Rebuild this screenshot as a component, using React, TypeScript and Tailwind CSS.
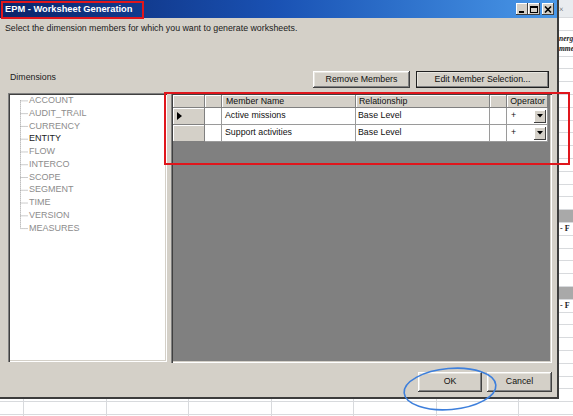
import React from "react";

const raised =
  "shadow-[inset_-1px_-1px_0_#404040,inset_1px_1px_0_#ffffff,inset_-2px_-2px_0_#808080,inset_2px_2px_0_#e8e6e0]";
const raisedSmall = "shadow-[inset_-1px_-1px_0_#404040,inset_1px_1px_0_#ffffff]";
const sunken =
  "shadow-[inset_1px_1px_0_#808080,inset_2px_2px_0_#404040,inset_-1px_-1px_0_#ffffff,inset_-2px_-2px_0_#d4d0c8]";

const dims = [
  "ACCOUNT",
  "AUDIT_TRAIL",
  "CURRENCY",
  "ENTITY",
  "FLOW",
  "INTERCO",
  "SCOPE",
  "SEGMENT",
  "TIME",
  "VERSION",
  "MEASURES",
];

const ROWH = 12.77;

function TitleButton({ kind }: { kind: "min" | "max" | "close" }) {
  return (
    <div className={`w-[12px] h-[12px] bg-[#d4d0c8] flex items-center justify-center ${raisedSmall}`}>
      <svg width="8" height="7" viewBox="0 0 8 7">
        {kind === "min" && <rect x="1" y="5" width="5" height="2" fill="#000" />}
        {kind === "max" && (
          <g fill="none" stroke="#000">
            <rect x="0.5" y="0.5" width="7" height="6" />
            <line x1="0" y1="1.5" x2="8" y2="1.5" />
          </g>
        )}
        {kind === "close" && (
          <g stroke="#000" strokeWidth="1.6">
            <line x1="1" y1="0.5" x2="7" y2="6.5" />
            <line x1="7" y1="0.5" x2="1" y2="6.5" />
          </g>
        )}
      </svg>
    </div>
  );
}

function Btn({ label, w, def }: { label: string; w: string; def?: boolean }) {
  return (
    <div
      className={`${w} h-full flex items-center justify-center bg-[#d4d0c8] text-[8.8px] text-[#101010] ${raised} ${
        def ? "outline outline-1 outline-[#202020] -outline-offset-1" : ""
      }`}
    >
      {label}
    </div>
  );
}

function TreePanel() {
  const h = dims.length * ROWH;
  return (
    <div className={`w-[159px] h-[269px] bg-white p-[2px] ${sunken}`}>
      <div className="flex -mt-[1px]">
        <svg width="19" height={h} viewBox={`0 0 19 ${h}`} className="shrink-0">
          <g stroke="#9a9a9a" strokeWidth="1" strokeDasharray="1 1">
            <line x1="10.5" y1={ROWH / 2} x2="10.5" y2={h - ROWH / 2} />
            {dims.map((d, i) => (
              <line key={d} x1="10.5" y1={i * ROWH + ROWH / 2 + 0.5} x2="18" y2={i * ROWH + ROWH / 2 + 0.5} />
            ))}
          </g>
        </svg>
        <div className="flex flex-col">
          {dims.map((d) => (
            <div
              key={d}
              className={`h-[12.77px] leading-[12.77px] text-[9px] whitespace-nowrap ${
                d === "ENTITY" ? "text-[#1a1a1a]" : "text-[#8c8c8c]"
              }`}
            >
              {d}
            </div>
          ))}
        </div>
      </div>
    </div>
  );
}

function Grid() {
  const head =
    "h-[13px] bg-[#d4d0c8] border-r border-b border-[#808080] shadow-[inset_1px_1px_0_#ffffff] text-[8.8px] leading-[12px] text-[#101010] whitespace-nowrap overflow-hidden";
  const rowHead = `h-[17px] bg-[#d4d0c8] border-r border-b border-[#808080] shadow-[inset_1px_1px_0_#ffffff] flex items-center`;
  const cell =
    "h-[17px] bg-white border-r border-b border-[#9a9a9a] text-[8.8px] text-[#101010] flex items-center whitespace-nowrap overflow-hidden";
  const rows = [
    { name: "Active missions", rel: "Base Level", current: true },
    { name: "Support activities", rel: "Base Level", current: false },
  ];
  return (
    <div className={`w-[381px] h-[270px] bg-[#808080] p-[2px] ${sunken}`}>
      <div className="grid grid-cols-[32px_17px_134px_134px_17px_41px]">
        <div className={head} />
        <div className={head} />
        <div className={`${head} pl-[4px]`}>Member Name</div>
        <div className={`${head} pl-[3px]`}>Relationship</div>
        <div className={head} />
        <div className={`${head} text-right pr-[2px]`}>Operator</div>
        {rows.map((r) => (
          <React.Fragment key={r.name}>
            <div className={`${rowHead} pl-[4px]`}>
              {r.current && (
                <svg width="5" height="8" viewBox="0 0 5 8">
                  <polygon points="0,0 5,4 0,8" fill="#000" />
                </svg>
              )}
            </div>
            <div className={cell} />
            <div className={`${cell} pl-[3px]`}>{r.name}</div>
            <div className={`${cell} pl-[2px]`}>{r.rel}</div>
            <div className={cell} />
            <div className={`${cell} pl-[4px] pr-[1px] justify-between`}>
              <span>+</span>
              <div className={`w-[12px] h-[13px] bg-[#d4d0c8] flex items-center justify-center ${raisedSmall}`}>
                <svg width="6" height="4" viewBox="0 0 6 4">
                  <polygon points="0,0 6,0 3,3.5" fill="#000" />
                </svg>
              </div>
            </div>
          </React.Fragment>
        ))}
      </div>
    </div>
  );
}

function Dialog() {
  return (
    <div className="absolute left-0 top-0 w-[559px] h-[399px] bg-[#d4d0c8] border-r-2 border-b-2 border-[#3c3c3c] flex flex-col">
      <div className="h-[18px] shrink-0 bg-gradient-to-r from-[#0a246a] via-[#1a52b4] to-[#4a98e8] flex items-center pl-[5px] pr-[3px]">
        <span className="text-white font-bold text-[9.3px] leading-[12px] whitespace-nowrap">
          EPM - Worksheet Generation
        </span>
        <div className="ml-auto flex items-center">
          <TitleButton kind="min" />
          <TitleButton kind="max" />
          <div className="w-[2px]" />
          <TitleButton kind="close" />
        </div>
      </div>
      <div className="flex flex-col pl-[8px] pr-[5px]">
        <p className="-ml-[3px] mt-[4px] h-[12px] leading-[12px] text-[8.8px] text-[#1a1a1a] whitespace-nowrap">
          Select the dimension members for which you want to generate worksheets.
        </p>
        <div className="mt-[37px] h-[17px] flex">
          <span className="ml-[2px] text-[8.8px] leading-[12px] text-[#1a1a1a]">Dimensions</span>
          <div className="ml-auto mr-[3px] flex h-full gap-[6px]">
            <Btn label="Remove Members" w="w-[97px]" />
            <Btn label="Edit Member Selection..." w="w-[133px]" def />
          </div>
        </div>
        <div className="mt-[5px] flex gap-[4px]">
          <TreePanel />
          <Grid />
        </div>
        <div className="mt-[9px] h-[20px] flex justify-end gap-[5px]">
          <Btn label="OK" w="w-[64px]" />
          <Btn label="Cancel" w="w-[65px]" />
        </div>
      </div>
    </div>
  );
}

function Sheet() {
  const rows = Array.from({ length: 33 }, (_, i) => i + 1);
  return (
    <div className="flex flex-col">
      <div className="h-[5.5px] bg-[#e9ecef]" />
      {rows.map((k) => (
        <div key={k} className={`h-[12.8px] flex shrink-0 ${k === 3 ? "" : "border-b border-[#d8dadd]"}`}>
          <div className="w-[24px] shrink-0 border-r border-[#d8dadd]" />
          <div className="w-[82.5px] shrink-0 border-r border-[#d8dadd]" />
          <div className="w-[82.5px] shrink-0 border-r border-[#d8dadd]" />
          <div className="w-[82.5px] shrink-0 border-r border-[#d8dadd]" />
          <div className="w-[82.5px] shrink-0 border-r border-[#d8dadd]" />
          <div className="w-[82.5px] shrink-0 border-r border-[#d8dadd]" />
          <div className="w-[82.5px] shrink-0 border-r border-[#d8dadd]" />
          <div
            className={`w-[82.5px] shrink-0 flex whitespace-nowrap font-[family-name:'Liberation_Serif',serif] ${
              k === 1 ? "bg-[#e9ecef] items-start pl-[40px] text-[8px] leading-[8px] text-[#555]" : ""
            } ${k === 3 ? "items-end pl-[40px] text-[7.5px] leading-[10px] font-bold italic text-[#222]" : ""} ${
              k === 4 ? "items-start pl-[40px] text-[7.5px] leading-[10px] font-bold italic text-[#222]" : ""
            } ${k === 17 || k === 23 ? "bg-[#a9a9a9]" : ""} ${
              k === 18 || k === 24 ? "items-center pl-[41px] text-[8px] font-bold text-[#222]" : ""
            }`}
          >
            {k === 1 && "×"}
            {k === 3 && "nerg"}
            {k === 4 && "mme"}
            {(k === 18 || k === 24) && "- F"}
          </div>
        </div>
      ))}
    </div>
  );
}

export default function App() {
  return (
    <div className="relative w-[573px] h-[416px] overflow-hidden bg-white font-[family-name:'Liberation_Sans',Arial,sans-serif]">
      <Sheet />
      <Dialog />
      <div className="absolute left-[1px] top-[1px] w-[143px] h-[18px] border-2 border-[#e0161c]" />
      <div className="absolute left-[164px] top-[92px] w-[406px] h-[73px] border-2 border-[#e0161c]" />
      <svg className="absolute left-[399px] top-[365px]" width="102" height="48" viewBox="0 0 102 48">
        <ellipse
          cx="51"
          cy="24"
          rx="46"
          ry="20.5"
          fill="none"
          stroke="#3d7fdc"
          strokeWidth="1.6"
          transform="rotate(-5 51 24)"
        />
      </svg>
    </div>
  );
}
